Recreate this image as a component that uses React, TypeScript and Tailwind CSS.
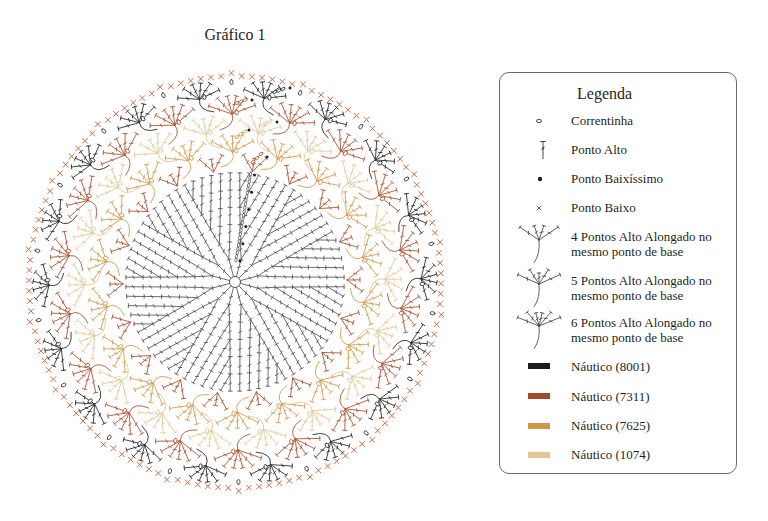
import React from 'react';

const CX = 235;
const CY = 230;
const rad = (d: number) => (d * Math.PI) / 180;
const f = (n: number) => n.toFixed(2);
const pol = (r: number, d: number): [number, number] => [CX + r * Math.cos(rad(d)), CY + r * Math.sin(rad(d))];

// one "ponto alto": stem, bar on top, small tick across the middle
function stitchPath(x1: number, y1: number, x2: number, y2: number, bar = 2.2) {
  const dx = x2 - x1;
  const dy = y2 - y1;
  const L = Math.hypot(dx, dy) || 1;
  const ux = dx / L;
  const uy = dy / L;
  const px = -uy;
  const py = ux;
  const mx = x1 + dx * 0.55;
  const my = y1 + dy * 0.55;
  return (
    `M${f(x1)} ${f(y1)}L${f(x2)} ${f(y2)}` +
    `M${f(x2 + px * bar)} ${f(y2 + py * bar)}L${f(x2 - px * bar)} ${f(y2 - py * bar)}` +
    `M${f(mx + px * 1.4 + ux * 0.9)} ${f(my + py * 1.4 + uy * 0.9)}L${f(mx - px * 1.4 - ux * 0.9)} ${f(my - py * 1.4 - uy * 0.9)}`
  );
}

function fanPath(
  bx: number,
  by: number,
  dir: number,
  n: number,
  spread: number,
  len: number,
  grow: number,
  stem: number,
  curve: number,
  bar = 2.2
) {
  let d = '';
  for (let j = 0; j < n; j++) {
    const t = n === 1 ? 0 : (j / (n - 1)) * 2 - 1;
    const a = dir + (t * spread) / 2;
    const l = len * (1 + grow * Math.abs(t));
    d += stitchPath(bx, by, bx + l * Math.cos(rad(a)), by + l * Math.sin(rad(a)), bar);
  }
  if (stem > 0) {
    const back = dir + 180;
    const ex = bx + stem * Math.cos(rad(back + curve));
    const ey = by + stem * Math.sin(rad(back + curve));
    const qx = bx + stem * 0.6 * Math.cos(rad(back - curve * 0.5));
    const qy = by + stem * 0.6 * Math.sin(rad(back - curve * 0.5));
    d += `M${f(bx)} ${f(by)}Q${f(qx)} ${f(qy)} ${f(ex)} ${f(ey)}`;
  }
  return d;
}

function buildDisc() {
  const rounds = 6;
  const step = 17.2;
  const r0 = 6;
  const rot = -90;
  let d = '';
  for (let k = 1; k <= rounds; k++) {
    const n = 12 * k;
    for (let i = 0; i < n; i++) {
      const s = Math.floor(i / k);
      const j = i % k;
      const a = rot + 30 * s + (30 * (j + 0.5)) / k;
      let pa = a;
      if (k > 1) {
        const m = Math.max(0, j - 1);
        pa = rot + 30 * s + (30 * (m + 0.5)) / (k - 1);
      }
      const [x1, y1] = pol(r0 + step * (k - 1) + (k > 1 ? 0.6 : 0), pa);
      const [x2, y2] = pol(r0 + step * k, a);
      d += stitchPath(x1, y1, x2, y2, 2);
    }
  }
  return d;
}

type Ring = { r: number; off: number; n: number; spread: number; len: number; stem: number; curve: number; color: string };

const rings: Ring[] = [
  { r: 112, off: 0, n: 3, spread: 75, len: 13, stem: 0, curve: 0, color: '#ab5433' },
  { r: 130, off: 10, n: 5, spread: 125, len: 16, stem: 19, curve: 38, color: '#d39d4e' },
  { r: 150, off: 0, n: 5, spread: 125, len: 16, stem: 20, curve: -38, color: '#e6c797' },
  { r: 168, off: 10, n: 6, spread: 140, len: 17, stem: 20, curve: 38, color: '#ae5533' },
  { r: 186, off: 0, n: 6, spread: 150, len: 15, stem: 19, curve: -38, color: '#2e2c2c' },
];

const discPath = buildDisc();

const ringPaths = rings.map((rg) => {
  let d = '';
  const ovals: { x: number; y: number; a: number }[] = [];
  for (let m = 0; m < 18; m++) {
    const th = -1 + rg.off + 20 * m;
    const [bx, by] = pol(rg.r, th);
    d += fanPath(bx, by, th, rg.n, rg.spread, rg.len, 0.45, rg.stem, rg.curve);
    if (rg.stem > 0) {
      const [ox, oy] = pol(rg.r + 1.5, th + 1.6);
      ovals.push({ x: ox, y: oy, a: th });
    }
  }
  return { d, ovals, color: rg.color };
});

const crossPath = (() => {
  let d = '';
  for (let m = 0; m < 18; m++) {
    for (let k = 0; k < 7; k++) {
      const a = 9 + 20 * m + (k * 20) / 7;
      const [x, y] = pol(k === 0 ? 209 : 206, a);
      const s = 2.5;
      d += `M${f(x - s)} ${f(y - s)}L${f(x + s)} ${f(y + s)}M${f(x + s)} ${f(y - s)}L${f(x - s)} ${f(y + s)}`;
    }
  }
  return d;
})();

const borderOvals = Array.from({ length: 18 }, (_, m) => {
  const a = 9 + 20 * m;
  const [x, y] = pol(200, a);
  return { x, y, a };
});

// start chain of the centre rounds
const chainA: [number, number] = [236, 208];
const chainB: [number, number] = [250.5, 122];
const chainOvals = Array.from({ length: 24 }, (_, i) => {
  const t = i / 23;
  return { x: chainA[0] + (chainB[0] - chainA[0]) * t, y: chainA[1] + (chainB[1] - chainA[1]) * t };
});
const chainAngle = (Math.atan2(chainB[1] - chainA[1], chainB[0] - chainA[0]) * 180) / Math.PI;
const chainDots = [0.0, 0.2, 0.4, 0.6, 0.8, 1.0].map((t) => ({
  x: chainA[0] + (chainB[0] - chainA[0]) * t + 4,
  y: chainA[1] + (chainB[1] - chainA[1]) * t + 1,
}));

// start chains of the outer rounds
const startChains: { pts: [number, number][]; dot: [number, number]; color: string }[] = [
  { pts: [[253, 110], [257, 106], [261, 102]], dot: [267, 105], color: '#ab5433' },
  { pts: [[237, 85], [241, 82], [245, 79.5]], dot: [249, 78], color: '#d39d4e' },
  { pts: [[262, 73], [266, 71], [270, 69.5]], dot: [277, 70], color: '#e6c797' },
  { pts: [[237, 51], [241, 49.5], [245, 48]], dot: [252, 48], color: '#ae5533' },
  { pts: [[275, 40], [279, 38.5], [283, 37]], dot: [290, 36], color: '#2e2c2c' },
];

function Chart() {
  return (
    <svg width={470} height={469} viewBox="0 0 470 469" className="block">
      <g fill="none" strokeLinecap="round" strokeLinejoin="round">
        <circle cx={CX} cy={CY} r={5.5} stroke="#444" strokeWidth={0.9} />
        <path d={discPath} stroke="#474747" strokeWidth={0.8} />
        {chainOvals.map((o, i) => (
          <ellipse
            key={'c' + i}
            cx={o.x}
            cy={o.y}
            rx={2}
            ry={1.15}
            transform={`rotate(${chainAngle} ${o.x} ${o.y})`}
            stroke="#4d4d4d"
            strokeWidth={0.7}
            fill="#fff"
          />
        ))}
        {ringPaths.map((rp, i) => (
          <g key={'r' + i}>
            <path d={rp.d} stroke={rp.color} strokeWidth={0.9} />
            {rp.ovals.map((o, j) => (
              <ellipse
                key={j}
                cx={o.x}
                cy={o.y}
                rx={2.5}
                ry={1.6}
                transform={`rotate(${o.a} ${o.x} ${o.y})`}
                stroke={rp.color}
                strokeWidth={0.85}
                fill="#fff"
              />
            ))}
          </g>
        ))}
        {startChains.map((sc, i) => (
          <g key={'s' + i}>
            {sc.pts.map((p, j) => (
              <ellipse
                key={j}
                cx={p[0]}
                cy={p[1]}
                rx={2.2}
                ry={1.3}
                transform={`rotate(-35 ${p[0]} ${p[1]})`}
                stroke={sc.color}
                strokeWidth={0.8}
                fill="#fff"
              />
            ))}
            <circle cx={sc.dot[0]} cy={sc.dot[1]} r={1.5} fill="#231f20" stroke="none" />
          </g>
        ))}
        <path d={crossPath} stroke="#c6653d" strokeWidth={0.95} />
        {borderOvals.map((o, i) => (
          <ellipse
            key={'b' + i}
            cx={o.x}
            cy={o.y}
            rx={2.5}
            ry={1.6}
            transform={`rotate(${o.a} ${o.x} ${o.y})`}
            stroke="#3a3838"
            strokeWidth={0.85}
          />
        ))}
        {chainDots.map((p, i) => (
          <circle key={'d' + i} cx={p.x} cy={p.y} r={1.5} fill="#231f20" stroke="none" />
        ))}
      </g>
    </svg>
  );
}

function FanIcon({ n, spread }: { n: number; spread: number }) {
  const d = fanPath(26, 17, -90, n, spread, 11, 1.1, 23, 12, 1.8);
  return (
    <svg width={52} height={42} viewBox="0 0 52 42" className="block">
      <path d={d} stroke="#3a3838" strokeWidth={0.8} fill="none" strokeLinecap="round" />
    </svg>
  );
}

function Row({ h, sym, children }: { h: string; sym: React.ReactNode; children: React.ReactNode }) {
  return (
    <div className={`flex items-center pl-[10px] ${h}`}>
      <div className="w-[58px] flex justify-center items-center">{sym}</div>
      <div className="ml-[3px] text-[13px] leading-[15px]">{children}</div>
    </div>
  );
}

function Legend() {
  return (
    <div className="ml-[29px] mt-[72px] w-[238px] h-[402px] border border-[#6a6a6a] rounded-[10px] flex flex-col">
      <div className="h-[33px] pt-[11px] pl-[77px] text-[16px] leading-[20px]">Legenda</div>
      <Row
        h="h-[29px]"
        sym={
          <svg width={10} height={6} className="block">
            <ellipse cx={5} cy={3} rx={2.5} ry={1.7} stroke="#3a3838" strokeWidth={0.9} fill="none" />
          </svg>
        }
      >
        Correntinha
      </Row>
      <Row
        h="h-[29px]"
        sym={
          <svg width={10} height={20} className="block ml-[7px]">
            <path d="M5 1.5L5 19M2 1.5L8 1.5M3.6 8.6L6.4 6.8M3.6 9.8L6.4 8" stroke="#3a3838" strokeWidth={0.9} fill="none" />
          </svg>
        }
      >
        Ponto Alto
      </Row>
      <Row
        h="h-[29px]"
        sym={
          <svg width={8} height={8} className="block ml-[2px]">
            <circle cx={4} cy={4} r={2.2} fill="#231f20" />
          </svg>
        }
      >
        Ponto Baixíssimo
      </Row>
      <Row
        h="h-[29px]"
        sym={
          <svg width={8} height={8} className="block">
            <path d="M1.8 1.8L6.2 6.2M6.2 1.8L1.8 6.2" stroke="#4a4a4a" strokeWidth={0.9} />
          </svg>
        }
      >
        Ponto Baixo
      </Row>
      <Row h="h-[44px]" sym={<FanIcon n={4} spread={112} />}>
        4 Pontos Alto Alongado no
        <br />
        mesmo ponto de base
      </Row>
      <Row h="h-[43px]" sym={<FanIcon n={5} spread={132} />}>
        5 Pontos Alto Alongado no
        <br />
        mesmo ponto de base
      </Row>
      <Row h="h-[42px]" sym={<FanIcon n={6} spread={136} />}>
        6 Pontos Alto Alongado no
        <br />
        mesmo ponto de base
      </Row>
      <Row h="h-[30px]" sym={<div className="w-[22px] h-[6px] bg-[#1e1b1c]" />}>
        Náutico (8001)
      </Row>
      <Row h="h-[30px]" sym={<div className="w-[22px] h-[6px] bg-[#a3482a]" />}>
        Náutico (7311)
      </Row>
      <Row h="h-[29px]" sym={<div className="w-[22px] h-[6px] bg-[#cd9745]" />}>
        Náutico (7625)
      </Row>
      <Row h="h-[29px]" sym={<div className="w-[22px] h-[6px] bg-[#e4c694]" />}>
        Náutico (1074)
      </Row>
    </div>
  );
}

export default function App() {
  return (
    <div className="flex w-[768px] h-[521px] bg-white font-['Liberation_Serif',serif] text-[#231f20] overflow-hidden">
      <div className="w-[470px] flex flex-col shrink-0">
        <div className="h-[52px] pt-[25px] text-center text-[16px] leading-[20px]">Gráfico 1</div>
        <Chart />
      </div>
      <Legend />
    </div>
  );
}
